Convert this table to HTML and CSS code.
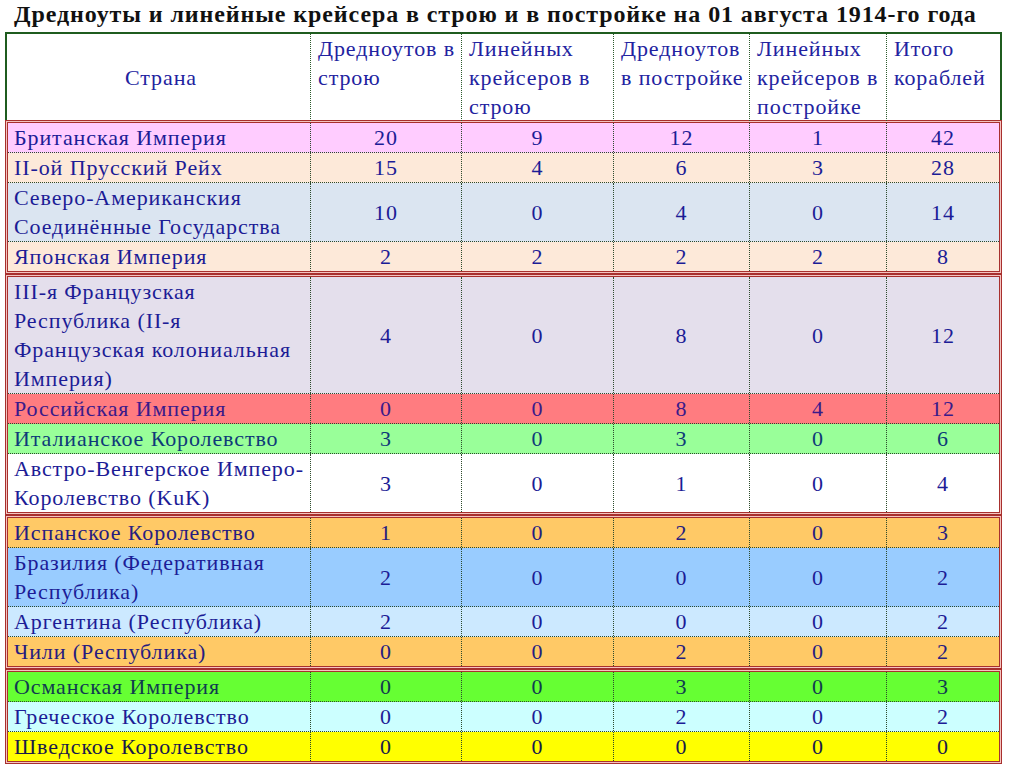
FILE: index.html
```html
<!DOCTYPE html>
<html lang="ru">
<head>
<meta charset="utf-8">
<title>Дредноуты и линейные крейсера</title>
<link rel="stylesheet" href="styles.css">
</head>
<body>
<h1 class="title">Дредноуты и линейные крейсера в строю и в постройке на 01 августа 1914-го года</h1>
<div class="sheet">
  <div class="head">
    <div class="hc hc-country">Страна</div>
    <div class="hc">Дредноутов в строю</div>
    <div class="hc">Линейных крейсеров в строю</div>
    <div class="hc">Дредноутов в постройке</div>
    <div class="hc">Линейных крейсеров в постройке</div>
    <div class="hc hc-last">Итого кораблей</div>
  </div>

  <div class="group">
    <div class="inner">
      <div class="row c-pink"><div class="c name">Британская Империя</div><div class="c">20</div><div class="c">9</div><div class="c">12</div><div class="c">1</div><div class="c last">42</div></div>
      <div class="row c-peach"><div class="c name">II-ой Прусский Рейх</div><div class="c">15</div><div class="c">4</div><div class="c">6</div><div class="c">3</div><div class="c last">28</div></div>
      <div class="row c-steel"><div class="c name">Северо-Американския Соединённые Государства</div><div class="c">10</div><div class="c">0</div><div class="c">4</div><div class="c">0</div><div class="c last">14</div></div>
      <div class="row c-peach"><div class="c name">Японская Империя</div><div class="c">2</div><div class="c">2</div><div class="c">2</div><div class="c">2</div><div class="c last">8</div></div>
    </div>
  </div>

  <div class="group">
    <div class="inner">
      <div class="row c-lav"><div class="c name">III-я Французская Республика (II-я Французская колониальная Империя)</div><div class="c">4</div><div class="c">0</div><div class="c">8</div><div class="c">0</div><div class="c last">12</div></div>
      <div class="row c-red"><div class="c name">Российская Империя</div><div class="c">0</div><div class="c">0</div><div class="c">8</div><div class="c">4</div><div class="c last">12</div></div>
      <div class="row c-lime"><div class="c name">Италианское Королевство</div><div class="c">3</div><div class="c">0</div><div class="c">3</div><div class="c">0</div><div class="c last">6</div></div>
      <div class="row c-white"><div class="c name">Австро-Венгерское Имперо-Королевство (KuK)</div><div class="c">3</div><div class="c">0</div><div class="c">1</div><div class="c">0</div><div class="c last">4</div></div>
    </div>
  </div>

  <div class="group">
    <div class="inner">
      <div class="row c-orange"><div class="c name">Испанское Королевство</div><div class="c">1</div><div class="c">0</div><div class="c">2</div><div class="c">0</div><div class="c last">3</div></div>
      <div class="row c-sky"><div class="c name">Бразилия (Федеративная Республика)</div><div class="c">2</div><div class="c">0</div><div class="c">0</div><div class="c">0</div><div class="c last">2</div></div>
      <div class="row c-ice"><div class="c name">Аргентина (Республика)</div><div class="c">2</div><div class="c">0</div><div class="c">0</div><div class="c">0</div><div class="c last">2</div></div>
      <div class="row c-orange"><div class="c name">Чили (Республика)</div><div class="c">0</div><div class="c">0</div><div class="c">2</div><div class="c">0</div><div class="c last">2</div></div>
    </div>
  </div>

  <div class="group">
    <div class="inner">
      <div class="row c-green"><div class="c name">Османская Империя</div><div class="c">0</div><div class="c">0</div><div class="c">3</div><div class="c">0</div><div class="c last">3</div></div>
      <div class="row c-cyan"><div class="c name">Греческое Королевство</div><div class="c">0</div><div class="c">0</div><div class="c">2</div><div class="c">0</div><div class="c last">2</div></div>
      <div class="row c-yellow"><div class="c name">Шведское Королевство</div><div class="c">0</div><div class="c">0</div><div class="c">0</div><div class="c">0</div><div class="c last">0</div></div>
    </div>
  </div>
</div>
</body>
</html>
```

FILE: styles.css
```css
* { box-sizing: border-box; }
html, body { margin: 0; padding: 0; background: #fff; }
body {
  width: 1010px;
  font-family: "Liberation Serif", "DejaVu Serif", serif;
  color: #1c1c96;
}
.title {
  margin: 0;
  padding: 1px 0 0 14px;
  height: 32px;
  font-size: 24px;
  line-height: 27px;
  letter-spacing: 0.9px;
  font-weight: bold;
  color: #111;
  white-space: nowrap;
}
.sheet {
  margin-left: 5px;
  width: 997px;
}
.head {
  display: grid;
  grid-template-columns: 304px 151px 152px 136px 137px 1fr;
  border: 2px solid #1f5c1f;
  border-bottom: none;
  height: 88px;
  background: #fff;
}
.hc {
  font-size: 22px;
  line-height: 29px;
  letter-spacing: 0.9px;
  padding: 0 2px 0 7px;
  border-right: 1px dotted #2c5a2c;
  color: #2222a0;
}
.hc-country {
  display: flex;
  align-items: center;
  justify-content: center;
}
.hc-last { border-right: none; }
.group {
  border: 1px solid #a8302e;
  padding: 1px;
  background: #f4c4c0;
}
.inner {
  border: 1px solid #a8302e;
}
.row {
  display: grid;
  grid-template-columns: 303px 151px 152px 136px 137px 1fr;
  border-bottom: 1px dotted #2c4a2c;
}
.row:last-child { border-bottom: none; }
.c {
  font-size: 22px;
  line-height: 29px;
  letter-spacing: 0.9px;
  border-right: 1px dotted #2c4a2c;
  display: flex;
  align-items: center;
  justify-content: center;
}
.c.name {
  display: block;
  padding: 0 2px 0 6px;
}
.c.last { border-right: none; }

.c-pink { background: #ffccff; }
.c-peach { background: #fde9d9; }
.c-steel { background: #dbe5f1; }
.c-lav { background: #e4dfec; }
.c-red { background: #ff7c80; color: #3a1a8a; }
.c-lime { background: #99ff99; color: #0e3a78; }
.c-white { background: #ffffff; }
.c-orange { background: #ffc966; color: #261c80; }
.c-sky { background: #99ccff; }
.c-ice { background: #cce9ff; }
.c-green { background: #66ff33; color: #103c50; }
.c-cyan { background: #ccffff; }
.c-yellow { background: #ffff00; color: #1a1a4a; }
```
